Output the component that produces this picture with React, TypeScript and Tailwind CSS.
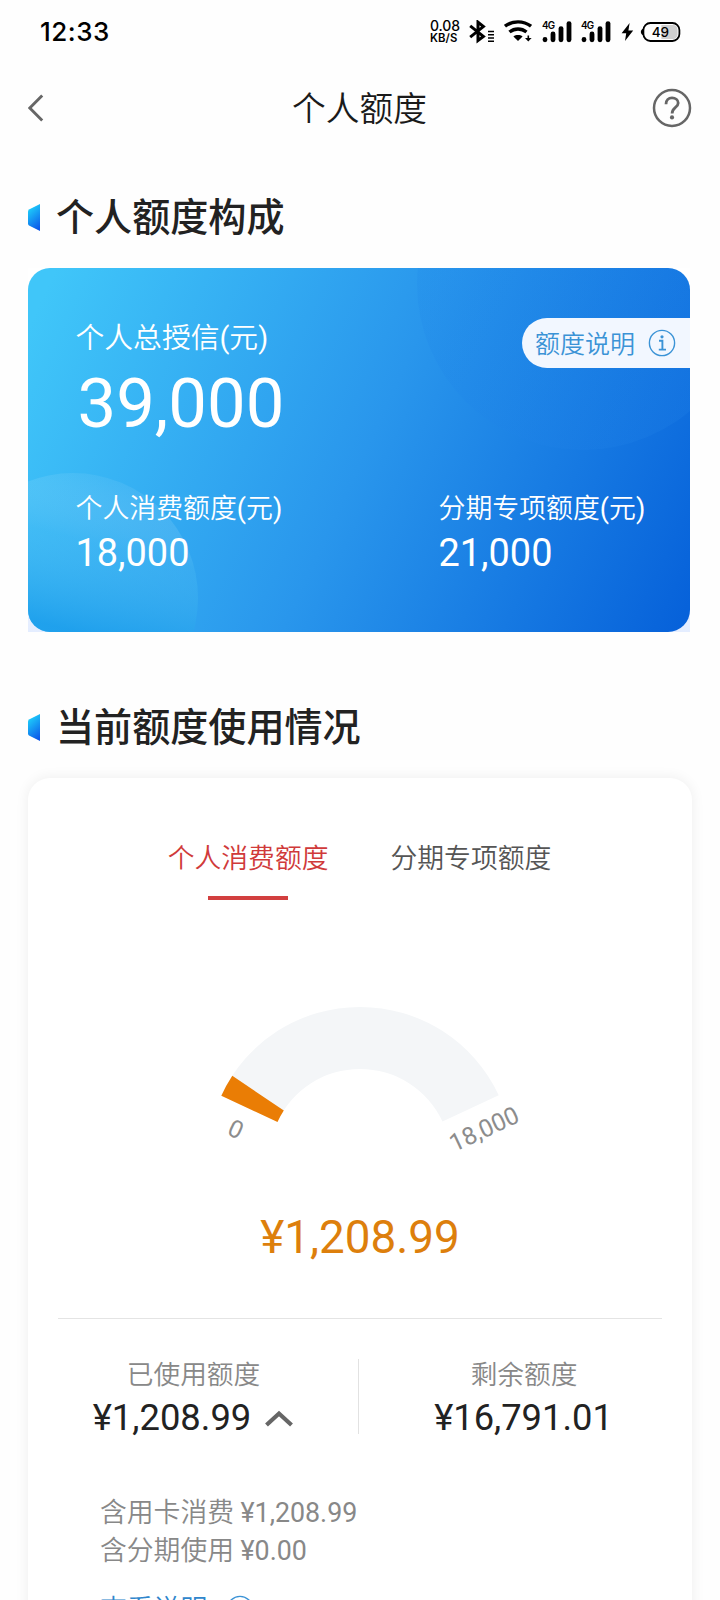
import React from "react";

const sans = "font-['Roboto','Noto_Sans_CJK_SC',sans-serif]";

function SignalBars() {
  return (
    <svg width="30" height="24" viewBox="0 0 30 24">
      <text x="0" y="8.9" className="font-['Inter',sans-serif] text-[9.8px] font-semibold" letterSpacing="-0.7">
        4G
      </text>
      <g stroke="#000" strokeWidth="4.8" strokeLinecap="round">
        <path d="M3 19.4V19.8" />
        <path d="M11 14V19.8" />
        <path d="M19 8.6V19.8" />
        <path d="M27 3.6V19.8" />
      </g>
    </svg>
  );
}

function StatusBar() {
  return (
    <div className="flex h-16 items-center justify-between pl-10 pr-[39px]">
      <span className="font-['Inter',sans-serif] text-[26px] font-medium leading-8 tracking-[0.5px] text-black">12:33</span>
      <div className="flex items-center">
        <div className="flex w-[30px] flex-col pt-px font-['Inter',sans-serif] text-black">
          <span className="text-[14px] font-medium leading-[12px] tracking-[-0.1px]">0.08</span>
          <span className="text-[11.3px] font-semibold leading-[13px] tracking-[0.1px]">KB/S</span>
        </div>
        <svg className="ml-[9px]" width="26" height="24" viewBox="0 0 26 24" fill="none" stroke="#000">
          <path d="M1.2 5.8L14.4 16.4L9 20.4V2.2L14.4 6.6L1.2 17.2" strokeWidth="3" />
          <path d="M19 11.5h6M19 14.7h6M19 18h6M19 21.2h6" strokeWidth="1.5" />
        </svg>
        <svg className="ml-[9px]" width="28" height="24" viewBox="0 0 28 24" fill="none" stroke="#000">
          <path d="M1 6.2C8.5 0.4 19.5 0.4 27 6.2" strokeWidth="3.4" />
          <path d="M5.5 12C10.6 8 17.4 8 22.5 12" strokeWidth="3.4" />
          <path d="M9.4 16.4C12 14.6 16 14.6 18.6 16.4L14 21Z" fill="#000" stroke="none" />
          <path d="M24.3 15.5V19" strokeWidth="1.6" />
          <path d="M21 18h6.6L24.3 21.6Z" fill="#000" stroke="none" />
        </svg>
        <div className="ml-[10px] flex gap-[9px]">
          <SignalBars />
          <SignalBars />
        </div>
        <svg className="ml-[10px]" width="13" height="20" viewBox="0 0 13 20">
          <path d="M8.6 1L0.6 11.2H5.2L4 19L12.2 8.4H7.4Z" />
        </svg>
        <svg className="ml-[6px]" width="41" height="22" viewBox="0 0 41 22">
          <path d="M3.4 7.6C0 8.8 0 13.2 3.4 14.4Z" />
          <rect x="3.4" y="2" width="36" height="18" rx="7" fill="#fff" stroke="#000" strokeWidth="1.8" />
          <path d="M21.4 4H33a4.5 4.5 0 0 1 4.5 4.5v5A4.5 4.5 0 0 1 33 18H21.4Z" fill="#d0d0d0" />
          <text x="20.4" y="15.8" textAnchor="middle" className="font-['Inter',sans-serif] text-[13.5px] font-medium">
            49
          </text>
        </svg>
      </div>
    </div>
  );
}

function NavBar() {
  return (
    <header className="flex h-[88px] items-center justify-between pl-7 pr-[28px]">
      <svg width="38" height="30" viewBox="0 0 38 30" fill="none">
        <path d="M14.2 2.5L1.8 15L14.2 27.5" stroke="#666" strokeWidth="2.9" />
      </svg>
      <h1 className="pl-px pt-1 text-[33.7px] font-[350] leading-10 text-[#1a1a1a]">个人额度</h1>
      <svg width="40" height="40" viewBox="0 0 40 40" fill="none" stroke="#666">
        <circle cx="20" cy="20" r="18" strokeWidth="2.5" />
        <path d="M14 16.2C14 12 16.6 9.9 20 9.9C23.4 9.9 26.2 12 26.2 15C26.2 17.4 24.8 18.4 23 19.8C21 21.4 20.1 22.4 20.1 25.6" strokeWidth="2.8" />
        <circle cx="20" cy="29.4" r="2.1" fill="#666" stroke="none" />
      </svg>
    </header>
  );
}

function SectionTitle({ id, children }: { id: string; children: string }) {
  return (
    <div className="flex h-[60px] items-center gap-[16px]">
      <svg width="12" height="27" viewBox="0 0 12 27">
        <defs>
          <linearGradient id={id} x1="0.3" y1="0" x2="0.7" y2="1">
            <stop offset="0" stopColor="#1fd6fb" />
            <stop offset="1" stopColor="#0b57ea" />
          </linearGradient>
        </defs>
        <path d="M12 0V27L1.5 21.8Q0 21 0 19.4V7.6Q0 6 1.5 5.2Z" fill={`url(#${id})`} />
      </svg>
      <h2 className="pt-[2px] text-[38.1px] font-medium leading-[60px] text-[#222]">{children}</h2>
    </div>
  );
}

function InfoIcon() {
  return (
    <svg width="28" height="28" viewBox="0 0 28 28" fill="none" stroke="#3b93d6">
      <circle cx="14" cy="14" r="12.6" strokeWidth="1.4" />
      <circle cx="14" cy="7.8" r="1.6" fill="#3b93d6" stroke="none" />
      <path d="M11 11.8H14.4V20.6M10.8 20.6H18" strokeWidth="1.9" />
    </svg>
  );
}

function Unit() {
  return (
    <>
      <span className="font-normal">(</span>元<span className="font-normal">)</span>
    </>
  );
}

function CreditCard() {
  return (
    <section className="relative h-[364px] w-[662px] bg-[linear-gradient(to_bottom,#ffffff_60%,#e4edff)]">
      <svg className="absolute inset-0" width="662" height="364" viewBox="0 0 662 364">
        <defs>
          <linearGradient id="cardFill" gradientUnits="userSpaceOnUse" x1="0" y1="60" x2="650" y2="360">
            <stop offset="0" stopColor="#40c6f9" />
            <stop offset="0.5" stopColor="#2996ec" />
            <stop offset="1" stopColor="#0762da" />
          </linearGradient>
          <linearGradient id="cornerFill" gradientUnits="userSpaceOnUse" x1="90" y1="205" x2="50" y2="364">
            <stop offset="0" stopColor="#fff" stopOpacity="0.04" />
            <stop offset="0.45" stopColor="#4fbdf3" stopOpacity="0.3" />
            <stop offset="1" stopColor="#189bea" stopOpacity="0.75" />
          </linearGradient>
          <linearGradient id="topFill" x1="0" y1="0.5" x2="0.8" y2="1">
            <stop offset="0" stopColor="#1578e6" stopOpacity="0.12" />
            <stop offset="1" stopColor="#2a8cec" stopOpacity="0.18" />
          </linearGradient>
          <clipPath id="cardClip">
            <rect width="662" height="364" rx="22" />
          </clipPath>
        </defs>
        <g clipPath="url(#cardClip)">
          <rect width="662" height="364" fill="url(#cardFill)" />
          <circle cx="555" cy="16" r="166" fill="url(#topFill)" />
          <circle cx="45" cy="330" r="125" fill="url(#cornerFill)" />
        </g>
      </svg>
      <div className="relative flex h-full flex-col pl-[47.5px] text-white">
        <div className="flex justify-between pt-[50px]">
          <div className="flex flex-col">
            <span className="text-[28.8px] font-[350] leading-[40px]">
              个人总授信
              <Unit />
            </span>
            <span className="mt-[3px] pl-[2px] text-[68.8px] leading-[86px]">39,000</span>
          </div>
          <div className="flex h-[50px] w-[168px] items-center justify-between rounded-l-[25px] bg-[#f2f7ff] pl-[13px] pr-[14px]">
            <span className="pt-1 text-[25px] font-[350] leading-[46px] text-[#3b93d6]">额度说明</span>
            <InfoIcon />
          </div>
        </div>
        <div className="mt-[42px] flex">
          <div className="flex w-[363px] flex-col">
            <span className="text-[26.9px] font-[350] leading-[41px]">
              个人消费额度
              <Unit />
            </span>
            <span className="text-[37.9px] leading-[47px]">18,000</span>
          </div>
          <div className="flex flex-col">
            <span className="text-[26.9px] font-[350] leading-[41px]">
              分期专项额度
              <Unit />
            </span>
            <span className="text-[37.9px] leading-[47px]">21,000</span>
          </div>
        </div>
      </div>
    </section>
  );
}

function Gauge() {
  return (
    <svg className="mx-auto" width="400" height="160" viewBox="160 1000 400 160">
      <path
        d="M221.3 1095.3A153 153 0 0 1 498.7 1095.3L442.5 1121.5A91 91 0 0 0 277.5 1121.5Z"
        fill="#f4f6f8"
      />
      <path d="M221.3 1095.8A153 153 0 0 1 232.3 1075.8L283.8 1110.6A91 91 0 0 0 277.5 1122Z" fill="#ea7d05" />
      <text
        transform="translate(236 1129) rotate(25)"
        y="8.6"
        textAnchor="middle"
        fill="#8c8c8c"
        className="text-[24.5px]"
      >
        0
      </text>
      <text
        transform="translate(484 1129) rotate(-25)"
        y="8.6"
        textAnchor="middle"
        fill="#8c8c8c"
        className="text-[24.5px]"
      >
        18,000
      </text>
    </svg>
  );
}

function UsageCard() {
  return (
    <section className="flex h-[880px] w-[664px] flex-col rounded-[22px] bg-white shadow-[0_0_14px_rgba(0,0,0,0.07)]">
      <div className="flex justify-center gap-[62px] pr-px pt-[61px] text-[26.8px] font-[350] leading-[40px]">
        <div className="flex flex-col items-center">
          <span className="text-[#d03a3a]">个人消费额度</span>
          <span className="mt-[17px] h-1 w-20 bg-[#d23f3f]" />
        </div>
        <span className="text-[#555]">分期专项额度</span>
      </div>
      <div className="pt-[100px]">
        <Gauge />
      </div>
      <div className="mt-[48px] text-center text-[45.8px] leading-[60px] text-[#dd7f0c]">¥1,208.99</div>
      <div className="mx-[30px] mt-[50px] h-px bg-[#e4e4e4]" />
      <div className="flex pt-[36px]">
        <div className="flex w-[330px] flex-col items-center">
          <span className="pl-px text-[26.7px] font-[350] leading-[40px] text-[#888]">已使用额度</span>
          <div className="flex items-center gap-[14px]">
            <span className="text-[36.4px] leading-[46px] text-[#222]">¥1,208.99</span>
            <svg width="28" height="18" viewBox="0 0 28 18" fill="none">
              <path d="M1.5 16L14 4.5L26.5 16" stroke="#666" strokeWidth="4.2" />
            </svg>
          </div>
        </div>
        <div className="mt-[4px] h-[75px] w-px bg-[#e2e2e2]" />
        <div className="flex w-[330px] flex-col items-center">
          <span className="text-[26.7px] font-[350] leading-[40px] text-[#888]">剩余额度</span>
          <span className="pr-px text-[36.3px] leading-[46px] text-[#222]">¥16,791.01</span>
        </div>
      </div>
      <div className="flex flex-col pl-[72px] pt-[53px] text-[26.8px] font-[350] leading-[38.4px] text-[#888]">
        <span>
          含用卡消费 <span className="font-normal">¥1,208.99</span>
        </span>
        <span>
          含分期使用 <span className="font-normal">¥0.00</span>
        </span>
        <div className="mt-[20px] flex items-center gap-[19px] text-[#2f86cc]">
          <span className="pt-px leading-[36px]">查看说明</span>
          <InfoIcon />
        </div>
      </div>
    </section>
  );
}

export default function App() {
  return (
    <div className={`h-[1600px] w-[720px] overflow-hidden bg-[#fefefe] ${sans}`}>
      <StatusBar />
      <NavBar />
      <main className="flex flex-col pl-7 pt-[35px]">
        <SectionTitle id="markerTop">个人额度构成</SectionTitle>
        <div className="mt-[21px]">
          <CreditCard />
        </div>
        <div className="mt-[65px]">
          <SectionTitle id="markerUsage">当前额度使用情况</SectionTitle>
        </div>
        <div className="mt-[21px]">
          <UsageCard />
        </div>
      </main>
    </div>
  );
}
